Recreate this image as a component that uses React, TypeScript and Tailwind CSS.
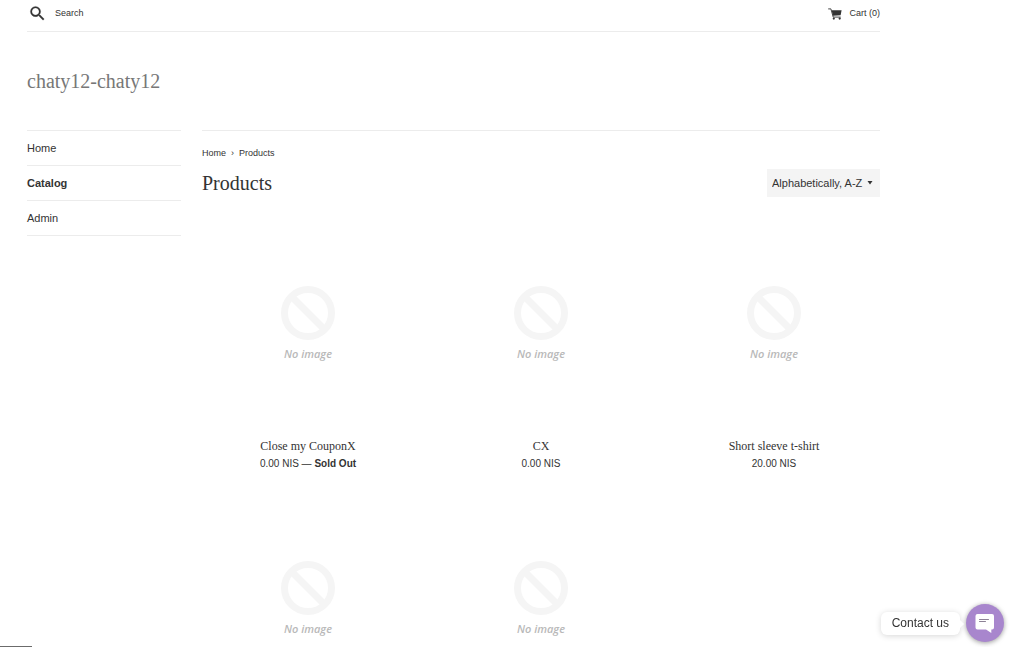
import { useState } from "react";

const navLinks = [
  { label: "Home", active: false },
  { label: "Catalog", active: true },
  { label: "Admin", active: false },
];

const products = [
  { id: 1, title: "Close my CouponX", price: "0.00 NIS", soldOut: true },
  { id: 2, title: "CX", price: "0.00 NIS", soldOut: false },
  { id: 3, title: "Short sleeve t-shirt", price: "20.00 NIS", soldOut: false },
  { id: 4 },
  { id: 5 },
];

function SearchIcon() {
  return (
    <svg
      viewBox="0 0 24 24"
      className="size-[19px]"
      fill="currentColor"
      stroke="currentColor"
      strokeWidth="0.3"
      aria-hidden="true"
    >
      <path d="M15.5 14h-.79l-.28-.27A6.47 6.47 0 0 0 16 9.5 6.5 6.5 0 1 0 9.5 16c1.61 0 3.09-.59 4.23-1.57l.27.28v.79l5 4.99L20.49 19l-4.99-5zm-6 0C7.01 14 5 11.99 5 9.5S7.01 5 9.5 5 14 7.01 14 9.5 11.99 14 9.5 14z" />
    </svg>
  );
}

function CartIcon() {
  return (
    <svg viewBox="0 0 14 12" className="h-3 w-3.5" fill="none" stroke="currentColor" aria-hidden="true">
      <path d="M3.600 2.200h10l-1 5-7.600.6z" fill="currentColor" stroke="none" />
      <path d="M.2.900h2.700l2.300 8.200h7.500" strokeWidth="0.9" />
      <circle cx="5.800" cy="10.600" r="1.1" fill="currentColor" stroke="none" />
      <circle cx="11.700" cy="10.600" r="1.1" fill="currentColor" stroke="none" />
    </svg>
  );
}

function NoImage() {
  return (
    <div className="flex aspect-square flex-col items-center pt-[65px]">
      <svg viewBox="0 0 54 54" className="size-[54px]" fill="none" stroke="#f5f5f5" aria-hidden="true">
        <circle cx="27" cy="27" r="23.500" strokeWidth="7" />
        <path d="M11 11l32 32" strokeWidth="7" />
      </svg>
      <p className="mt-1.5 font-['Open_Sans',sans-serif] text-[11px] leading-4 font-semibold text-[#b9b9b9] italic">
        No image
      </p>
    </div>
  );
}

export default function App() {
  const [sort, setSort] = useState("title-ascending");

  return (
    <div className="h-screen overflow-hidden bg-white font-['Liberation_Sans',Arial,sans-serif] text-[11px] text-[#333]">
      <div className="max-w-[907px] px-[27px]">
        {/* Top bar */}
        <div className="flex h-8 items-center justify-between border-b border-[#ececec] pb-1 text-[9px]">
          <form className="flex items-center gap-2 pl-px" onSubmit={(e) => e.preventDefault()}>
            <button type="submit" aria-label="Search">
              <SearchIcon />
            </button>
            <input
              type="search"
              aria-label="Search our store"
              placeholder="Search"
              className="w-40 outline-none placeholder:text-[#333]"
            />
          </form>
          <a href="#cart" className="flex items-center gap-[7px]">
            <CartIcon />
            Cart (0)
          </a>
        </div>

        {/* Shop name */}
        <header className="flex h-[98px] items-center font-['Liberation_Serif',serif] text-[20px] leading-6 text-[#777]">
          <a href="#home">chaty12-chaty12</a>
        </header>

        <div className="flex gap-[21px]">
          {/* Sidebar */}
          <nav className="w-[154px] shrink-0">
            <ul className="border-t border-[#ececec]">
              {navLinks.map((link) => (
                <li key={link.label} className="border-b border-[#ececec]">
                  <a
                    href={"#" + link.label.toLowerCase()}
                    className={link.active ? "block py-[9px] leading-4 font-bold" : "block py-[9px] leading-4"}
                  >
                    {link.label}
                  </a>
                </li>
              ))}
            </ul>
          </nav>

          <main className="min-w-0 flex-1 border-t border-[#ececec] pt-3.5">
            <nav aria-label="Breadcrumb" className="flex gap-[5px] text-[9px] leading-4">
              <a href="#home">Home</a>
              <span aria-hidden="true">›</span>
              <span>Products</span>
            </nav>

            <div className="mt-2 flex items-center justify-between">
              <h1 className="font-['Liberation_Serif',serif] text-[20px] leading-6">Products</h1>
              <div className="relative">
                <select
                  aria-label="Sort by"
                  value={sort}
                  onChange={(e) => setSort(e.target.value)}
                  className="h-7 w-[113px] appearance-none bg-[#f4f4f4] pl-[5px] text-[11px] outline-none"
                >
                  <option value="title-ascending">Alphabetically, A-Z</option>
                  <option value="title-descending">Alphabetically, Z-A</option>
                  <option value="price-ascending">Price, low to high</option>
                  <option value="price-descending">Price, high to low</option>
                </select>
                <svg
                  viewBox="0 0 6 4"
                  className="pointer-events-none absolute top-3 right-[7px] h-1 w-1.5"
                  fill="currentColor"
                  aria-hidden="true"
                >
                  <path d="M.5 0h5L3 3.600z" />
                </svg>
              </div>
            </div>

            {/* Product grid */}
            <div className="mt-6 grid grid-cols-3 gap-[21px]">
              {products.map((product) => (
                <a key={product.id} href={"#product-" + product.id} className="block text-center">
                  <NoImage />
                  {product.title && (
                    <div className="pt-1 pb-0.5">
                      <p className="font-['Liberation_Serif',serif] text-[12px] leading-[18px]">{product.title}</p>
                      <p className="text-[10px] leading-[18px]">
                        {product.price}
                        {product.soldOut && (
                          <>
                            {" — "}
                            <strong>Sold Out</strong>
                          </>
                        )}
                      </p>
                    </div>
                  )}
                </a>
              ))}
            </div>
          </main>
        </div>
      </div>

      {/* Chat widget */}
      <div className="fixed right-5 bottom-[5px] flex items-center gap-1.5">
        <div className="relative flex h-[23px] items-center rounded-md bg-white px-[11px] text-[12px] shadow-[0_1px_6px_rgba(0,0,0,0.16)]">
          Contact us
          <span className="absolute top-2 -right-1 border-y-4 border-l-4 border-y-transparent border-l-white" />
        </div>
        <button
          type="button"
          aria-label="Open chat"
          className="flex size-[38px] items-center justify-center rounded-full bg-[#a886cd] shadow-[0_1px_5px_rgba(0,0,0,0.4)]"
        >
          <svg viewBox="0 0 20 20" className="size-5" aria-hidden="true">
            <path
              d="M2.500 1h14.500A2 2 0 0 1 19 3v11.500a2 2 0 0 1-2 2H16.300V20L11 16.500H2.500a2 2 0 0 1-2-2V3a2 2 0 0 1 2-2z"
              fill="#fff"
            />
            <path d="M4.500 6.500h9M4.500 8.500h6" stroke="#8d8296" strokeWidth="1" strokeLinecap="round" />
          </svg>
        </button>
      </div>

      {/* Link status strip */}
      <div className="fixed bottom-0 left-0 h-px w-8 bg-[#6b6b6b]" />
    </div>
  );
}
